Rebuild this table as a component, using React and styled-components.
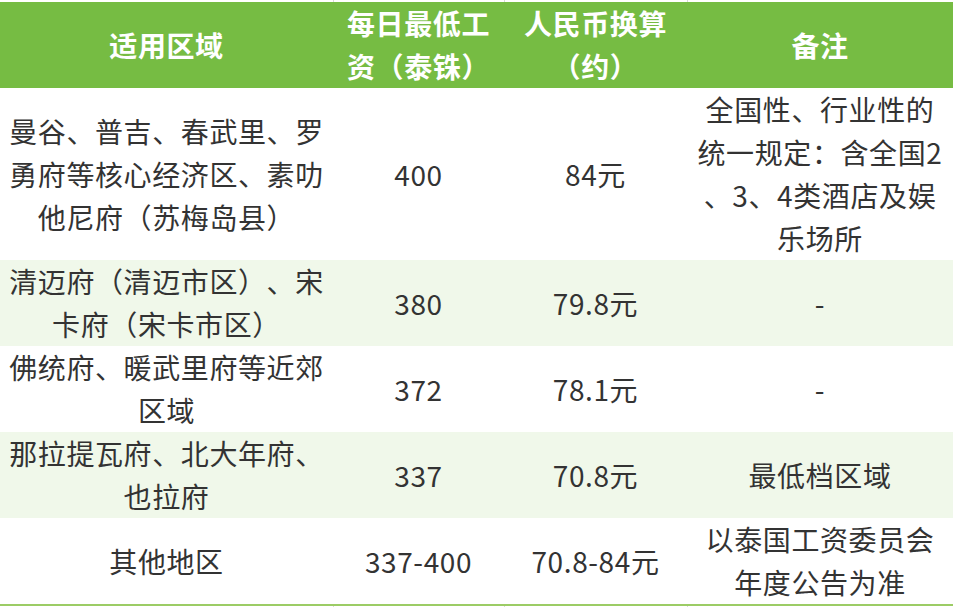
import React from "react";
import styled, { createGlobalStyle } from "styled-components";

const Global = createGlobalStyle`
  html, body { margin: 0; padding: 0; background: #ffffff; }
  body { font-family: "Noto Sans CJK SC", "Noto Sans", sans-serif; }
`;

const Table = styled.table`
  width: 953px;
  border-collapse: collapse;
  table-layout: fixed;
  font-size: 28px;
  letter-spacing: 0.6px;
  color: #333333;
  text-spacing-trim: space-all;
  font-feature-settings: "halt" 0, "chws" 0, "palt" 0;
`;

const CutRow = styled.tr`
  height: 2px;
  td {
    padding: 0;
    height: 2px;
    line-height: 0;
    font-size: 0;
    border-right: 1px solid #d9d9d9;
  }
  td:last-child { border-right: none; }
`;

const HeadRow = styled.tr`
  background: #76bc43;
`;

const Th = styled.th`
  color: #ffffff;
  font-weight: 700;
  line-height: 43px;
  padding: 0 7px;
  height: 86px;
  text-align: center;
  vertical-align: middle;
`;

const Row = styled.tr`
  background: ${(p) => (p.$alt ? "#f0f8ea" : "#ffffff")};
  ${(p) => (p.$last ? "border-bottom: 2px solid #9ccc65;" : "")}
`;

const Td = styled.td`
  font-weight: 400;
  line-height: 43px;
  padding: 0 7px;
  text-align: center;
  vertical-align: middle;
  white-space: nowrap;
`;

const Lines = ({ lines }) =>
  lines.map((l, i) => (
    <React.Fragment key={i}>
      {i > 0 && <br />}
      {l}
    </React.Fragment>
  ));

const rows = [
  {
    area: ["曼谷、普吉、春武里、罗", "勇府等核心经济区、素叻", "他尼府（苏梅岛县）"],
    thb: "400",
    cny: "84元",
    note: ["全国性、行业性的", "统一规定：含全国2", "、3、4类酒店及娱", "乐场所"],
  },
  {
    area: ["清迈府（清迈市区）、宋", "卡府（宋卡市区）"],
    thb: "380",
    cny: "79.8元",
    note: ["-"],
  },
  {
    area: ["佛统府、暖武里府等近郊", "区域"],
    thb: "372",
    cny: "78.1元",
    note: ["-"],
  },
  {
    area: ["那拉提瓦府、北大年府、", "也拉府"],
    thb: "337",
    cny: "70.8元",
    note: ["最低档区域"],
  },
  {
    area: ["其他地区"],
    thb: "337-400",
    cny: "70.8-84元",
    note: ["以泰国工资委员会", "年度公告为准"],
  },
];

export default function App() {
  return (
    <>
      <Global />
      <Table>
        <colgroup>
          <col style={{ width: 333 }} />
          <col style={{ width: 171 }} />
          <col style={{ width: 183 }} />
          <col style={{ width: 266 }} />
        </colgroup>
        <tbody>
          <CutRow>
            <td />
            <td />
            <td />
            <td />
          </CutRow>
          <HeadRow>
            <Th>适用区域</Th>
            <Th>
              每日最低工
              <br />
              资（泰铢）
            </Th>
            <Th>
              人民币换算
              <br />
              （约）
            </Th>
            <Th>备注</Th>
          </HeadRow>
          {rows.map((r, i) => (
            <Row key={i} $alt={i % 2 === 1} $last={i === rows.length - 1}>
              <Td>
                <Lines lines={r.area} />
              </Td>
              <Td>{r.thb}</Td>
              <Td>{r.cny}</Td>
              <Td>
                <Lines lines={r.note} />
              </Td>
            </Row>
          ))}
          <CutRow>
            <td />
            <td />
            <td />
            <td />
          </CutRow>
        </tbody>
      </Table>
    </>
  );
}
